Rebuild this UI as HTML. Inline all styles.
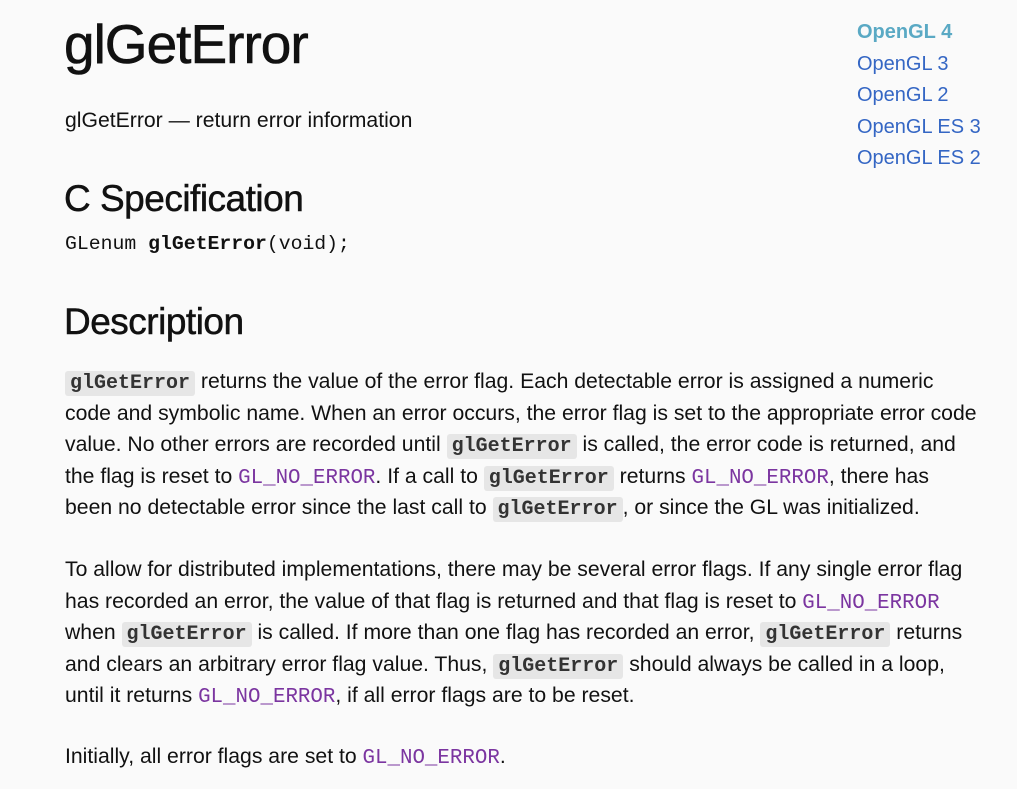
<!DOCTYPE html>
<html><head><meta charset="utf-8"><style>
body{margin:0;background:#fafafa;width:1017px;height:789px;overflow:hidden;font-family:"Liberation Sans",sans-serif;color:#111;position:relative}
h1{position:absolute;left:64px;top:12px;margin:0;font-size:55px;font-weight:normal;letter-spacing:-1px;-webkit-text-stroke:0.6px #111}
h2{position:absolute;left:64px;margin:0;font-size:37px;font-weight:normal;letter-spacing:-0.5px;-webkit-text-stroke:0.5px #111}
.nav{position:absolute;left:857px;top:17px;font-size:20px;line-height:31.5px;color:#3466c4}
.nav b{color:#5aa9c4}
.p{position:absolute;left:65px;font-size:21.2px;line-height:31.5px;white-space:nowrap}
code{font-family:"Liberation Mono",monospace;font-weight:bold;font-size:20px;background:#e6e6e6;padding:1px 5px;border-radius:3px;color:#333;line-height:0}
.k{font-family:"Liberation Mono",monospace;font-size:20.8px;color:#7b35a0;line-height:0}
</style></head><body>
<h1>glGetError</h1>
<div class="p" style="top:105px">glGetError — return error information</div>
<div class="nav"><b>OpenGL 4</b><br>OpenGL 3<br>OpenGL 2<br>OpenGL ES 3<br>OpenGL ES 2</div>
<h2 style="top:178px">C Specification</h2>
<div class="p" style="top:229px;font-family:'Liberation Mono',monospace;font-size:19.8px">GLenum <b>glGetError</b>(void);</div>
<h2 style="top:301px">Description</h2>
<div class="p" style="top:366px"><code>glGetError</code> returns the value of the error flag. Each detectable error is assigned a numeric<br>code and symbolic name. When an error occurs, the error flag is set to the appropriate error code<br>value. No other errors are recorded until <code>glGetError</code> is called, the error code is returned, and<br>the flag is reset to <span class="k">GL_NO_ERROR</span>. If a call to <code>glGetError</code> returns <span class="k">GL_NO_ERROR</span>, there has<br>been no detectable error since the last call to <code>glGetError</code>, or since the GL was initialized.</div>
<div class="p" style="top:554px">To allow for distributed implementations, there may be several error flags. If any single error flag<br>has recorded an error, the value of that flag is returned and that flag is reset to <span class="k">GL_NO_ERROR</span><br>when <code>glGetError</code> is called. If more than one flag has recorded an error, <code>glGetError</code> returns<br>and clears an arbitrary error flag value. Thus, <code>glGetError</code> should always be called in a loop,<br>until it returns <span class="k">GL_NO_ERROR</span>, if all error flags are to be reset.</div>
<div class="p" style="top:741px">Initially, all error flags are set to <span class="k">GL_NO_ERROR</span>.</div>
</body></html>
